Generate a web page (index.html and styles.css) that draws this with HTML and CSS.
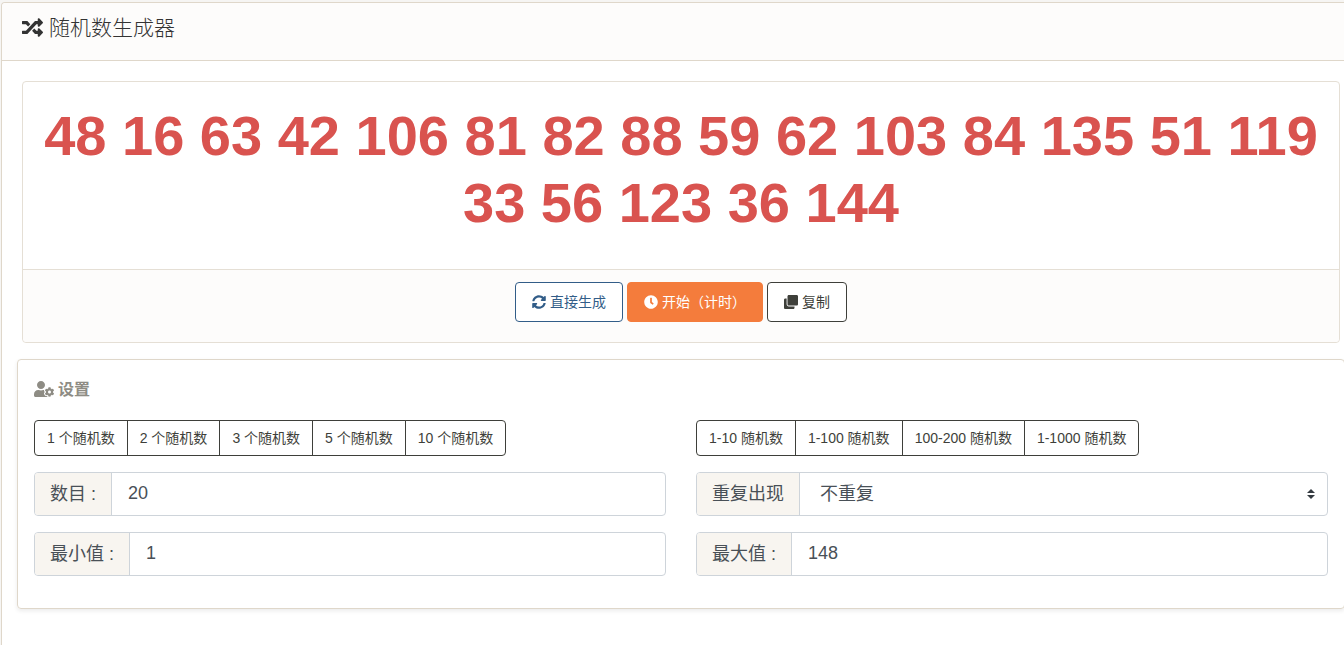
FILE: index.html
```html
<!DOCTYPE html>
<html lang="zh-CN">
	<head>
		<meta charset="utf-8">
		<title>随机数生成器</title>
		<link rel="stylesheet" href="styles.css">
	</head>
	<body>
		<main class="card">
			<header class="card-header">
				<svg class="icon" viewBox="0 0 512 512" aria-hidden="true"><path d="M504.971 359.029c9.373 9.373 9.373 24.569 0 33.941l-80 79.984c-15.01 15.01-40.971 4.49-40.971-16.971V416h-58.785a12.004 12.004 0 0 1-8.773-3.812l-70.556-75.596 53.333-57.143L352 336h32v-39.981c0-21.438 25.943-31.998 40.971-16.971l80 79.981zM12 176h84l52.781 56.551 53.333-57.143-70.556-75.596A11.999 11.999 0 0 0 122.785 96H12c-6.627 0-12 5.373-12 12v56c0 6.627 5.373 12 12 12zm372 0v39.984c0 21.46 25.961 31.98 40.971 16.971l80-79.984c9.373-9.373 9.373-24.569 0-33.941l-80-79.981C409.943 24.021 384 34.582 384 56.019V96h-58.785a12.004 12.004 0 0 0-8.773 3.812L96 336H12c-6.627 0-12 5.373-12 12v56c0 6.627 5.373 12 12 12h110.785c3.326 0 6.503-1.381 8.773-3.812L352 176h32z"/></svg>
				<h1>随机数生成器</h1>
			</header>
			<div class="card-body">
				<section class="result">
					<div class="result-text">48 16 63 42 106 81 82 88 59 62 103 84 135 51 119 33 56 123 36 144</div>
					<div class="result-footer">
						<button type="button" class="btn btn-blue">
							<svg class="icon" viewBox="0 0 512 512" aria-hidden="true"><path d="M370.72 133.28C339.458 104.008 298.888 87.962 255.848 88c-77.458.068-144.328 53.178-162.791 126.85-1.344 5.363-6.122 9.15-11.651 9.15H24.103c-7.498 0-13.194-6.807-11.807-14.176C33.933 94.924 134.813 8 256 8c66.448 0 126.791 26.136 171.315 68.685L463.03 40.97C478.149 25.851 504 36.559 504 57.941V192c0 13.255-10.745 24-24 24H345.941c-21.382 0-32.09-25.851-16.971-40.971l41.75-41.749zM32 296h134.059c21.382 0 32.09 25.851 16.971 40.971l-41.75 41.75c31.262 29.273 71.835 45.319 114.876 45.28 77.418-.07 144.315-53.144 162.787-126.849 1.344-5.363 6.122-9.15 11.651-9.15h57.304c7.498 0 13.194 6.807 11.807 14.176C478.067 417.076 377.187 504 256 504c-66.448 0-126.791-26.136-171.315-68.685L48.97 471.03C33.851 486.149 8 475.441 8 454.059V320c0-13.255 10.745-24 24-24z"/></svg>
							<span>直接生成</span>
						</button>
						<button type="button" class="btn btn-orange">
							<svg class="icon" viewBox="0 0 512 512" aria-hidden="true"><path d="M256,8C119,8,8,119,8,256S119,504,256,504,504,393,504,256,393,8,256,8Zm92.49,313h0l-20,25a16,16,0,0,1-22.49,2.5h0l-67-49.72a40,40,0,0,1-15-31.23V112a16,16,0,0,1,16-16h32a16,16,0,0,1,16,16V256l58,42.5A16,16,0,0,1,348.49,321Z"/></svg>
							<span>开始（计时）</span>
						</button>
						<button type="button" class="btn btn-dark">
							<svg class="icon" viewBox="0 0 512 512" aria-hidden="true"><path d="M464 0c26.51 0 48 21.49 48 48v288c0 26.51-21.49 48-48 48H176c-26.51 0-48-21.49-48-48V48c0-26.51 21.49-48 48-48h288M176 416c-44.112 0-80-35.888-80-80V128H48c-26.51 0-48 21.49-48 48v288c0 26.51 21.49 48 48 48h288c26.51 0 48-21.49 48-48v-48H176z"/></svg>
							<span>复制</span>
						</button>
					</div>
				</section>

				<section class="settings">
					<h2>
						<svg class="icon icon-wide" viewBox="0 0 640 512" aria-hidden="true"><path d="M610.5 373.3c2.6-14.1 2.6-28.5 0-42.6l25.8-14.9c3-1.7 4.3-5.2 3.3-8.5-6.7-21.6-18.2-41.2-33.2-57.4-2.3-2.5-6-3.1-9-1.4l-25.8 14.9c-10.9-9.3-23.4-16.5-36.9-21.3v-29.8c0-3.4-2.4-6.4-5.7-7.1-22.3-5-45-4.8-66.2 0-3.3.7-5.7 3.7-5.7 7.1v29.8c-13.5 4.8-26 12-36.9 21.3l-25.8-14.9c-2.9-1.7-6.7-1.1-9 1.4-15 16.2-26.5 35.8-33.2 57.4-1 3.3.4 6.8 3.3 8.5l25.8 14.9c-2.6 14.1-2.6 28.5 0 42.6l-25.8 14.9c-3 1.7-4.3 5.2-3.3 8.5 6.7 21.6 18.2 41.1 33.2 57.4 2.3 2.5 6 3.1 9 1.4l25.8-14.9c10.9 9.3 23.4 16.5 36.9 21.3v29.8c0 3.4 2.4 6.4 5.7 7.1 22.3 5 45 4.8 66.2 0 3.3-.7 5.7-3.7 5.7-7.1v-29.8c13.5-4.8 26-12 36.9-21.3l25.8 14.9c2.9 1.7 6.7 1.1 9-1.4 15-16.2 26.5-35.8 33.2-57.4 1-3.3-.4-6.8-3.3-8.5l-25.8-14.9zM496 400.5c-26.8 0-48.5-21.8-48.5-48.5s21.8-48.5 48.5-48.5 48.5 21.8 48.5 48.5-21.7 48.5-48.5 48.5zM224 256c70.7 0 128-57.3 128-128S294.7 0 224 0 96 57.3 96 128s57.3 128 128 128zm201.2 226.5c-2.3-1.2-4.6-2.6-6.8-3.9l-7.9 4.6c-6 3.4-12.8 5.3-19.6 5.3-10.9 0-21.4-4.6-28.9-12.6-18.3-19.8-32.3-43.9-40.2-69.6-5.5-17.7 1.9-36.4 17.9-45.7l7.9-4.6c-.1-2.6-.1-5.2 0-7.8l-7.9-4.6c-16-9.2-23.4-28-17.9-45.7.9-2.9 2.2-5.8 3.2-8.7-3.8-.3-7.5-1.2-11.4-1.2h-16.7c-22.2 10.2-46.9 16-72.9 16s-50.6-5.8-72.9-16h-16.7C60.2 288 0 348.2 0 422.4V464c0 26.5 21.5 48 48 48h352c10.1 0 19.5-3.2 27.2-8.5-1.2-3.8-2-7.7-2-11.8v-9.2z"/></svg>
						<span>设置</span>
					</h2>
					<div class="grid">
						<div class="btn-group">
							<button type="button">1 个随机数</button>
							<button type="button">2 个随机数</button>
							<button type="button">3 个随机数</button>
							<button type="button">5 个随机数</button>
							<button type="button">10 个随机数</button>
						</div>
						<div class="btn-group">
							<button type="button">1-10 随机数</button>
							<button type="button">1-100 随机数</button>
							<button type="button">100-200 随机数</button>
							<button type="button">1-1000 随机数</button>
						</div>
						<div class="input-group">
							<label for="count">数目 :</label>
							<input type="text" id="count" value="20">
						</div>
						<div class="input-group">
							<label for="repeat">重复出现</label>
							<select id="repeat">
								<option selected>不重复</option>
								<option>可重复</option>
							</select>
						</div>
						<div class="input-group">
							<label for="min">最小值 :</label>
							<input type="text" id="min" value="1">
						</div>
						<div class="input-group">
							<label for="max">最大值 :</label>
							<input type="text" id="max" value="148">
						</div>
					</div>
				</section>
			</div>
		</main>
	</body>
</html>
```
FILE: styles.css
```css
*{ margin:0; padding:0; box-sizing:border-box; }
body{ min-height:100vh; display:flex; padding-top:2px; background:#f6f5f3; overflow:hidden; color:#3e3f3a; font-family:"Liberation Sans","Noto Sans CJK SC",sans-serif; font-size:14px; }
button,input,select{ font-family:inherit; cursor:pointer; }
input{ cursor:text; }
.icon{ width:14px; height:14px; fill:currentColor; flex:none; }

/* the card runs past the right edge of the window */
.card{ flex:1; min-width:0; margin:0 -17px 0 1px; border:1px solid #dfd7ca; border-bottom:0; border-radius:4px 4px 0 0; background:#fff; }
.card-header{ display:flex; align-items:center; gap:6px; height:58px; padding:0 20px 8px; border-bottom:1px solid #dfd7ca; border-radius:4px 4px 0 0; background:#fdfcfb; color:#333; }
.card-header h1{ font-size:21px; font-weight:300; line-height:28px; }
.card-header .icon{ width:21px; height:21px; }
.card-body{ padding:20px; }

.result{ border:1px solid #e5dfd5; border-radius:4px; }
.result-text{ padding:20px 18px 33px; color:#d9534f; font-size:56px; font-weight:bold; line-height:67px; text-align:center; }
.result-footer{ display:flex; justify-content:center; gap:4px; padding:12px 20px 20px; border-top:1px solid #e5dfd5; border-radius:0 0 4px 4px; background:#fdfcfb; }
.btn{ display:flex; align-items:center; gap:4px; height:40px; padding:0 16px; border:1px solid; border-radius:4px; background:#fff; font-size:14px; }
.btn span{ padding-bottom:2px; }
.btn-blue{ color:#325d88; }
.btn-orange{ border-color:#f47c3c; background:#f47c3c; color:#fff; }
.btn-dark{ color:#3e3f3a; }

.settings{ margin:16px -5px 0; padding:16px 16px 32px; border:1px solid #dfd7ca; border-radius:4px; box-shadow:0 2px 4px rgba(0,0,0,.08); }
.settings h2{ display:flex; align-items:center; gap:4px; height:26px; margin-bottom:18px; color:#8e8c84; font-size:16px; font-weight:bold; }
.settings h2 span{ padding-bottom:2px; }
.settings .icon-wide{ width:20px; height:16px; }
.grid{ display:grid; grid-template-columns:1fr 1fr; gap:16px 30px; }

.btn-group{ display:flex; }
.btn-group button{ height:36px; padding:0 12px 2px; border:1px solid #3e3f3a; background:#fff; color:#3e3f3a; font-size:14px; white-space:nowrap; }
.btn-group button + button{ margin-left:-1px; }
.btn-group button:first-child{ border-radius:4px 0 0 4px; }
.btn-group button:last-child{ border-radius:0 4px 4px 0; }

.input-group{ display:flex; height:44px; border:1px solid #ced4da; border-radius:4px; background:#fff; overflow:hidden; color:#495057; font-size:18px; }
.input-group label{ display:flex; align-items:center; padding:0 15px 4px; border-right:1px solid #ced4da; background:#f8f5f0; white-space:nowrap; }
.input-group input,.input-group select{ flex:1; min-width:0; padding:0 16px 2px; border:0; background:none; color:#495057; font-size:18px; }
.input-group select{ padding:0 28px 0 20px; appearance:none; background:url("data:image/svg+xml,%3Csvg xmlns='http://www.w3.org/2000/svg' viewBox='0 0 4 5'%3E%3Cpath fill='%23343a40' d='M2 0L0 2h4zm0 5L0 3h4z'/%3E%3C/svg%3E") no-repeat right 12px center/8px 10px; }
```
